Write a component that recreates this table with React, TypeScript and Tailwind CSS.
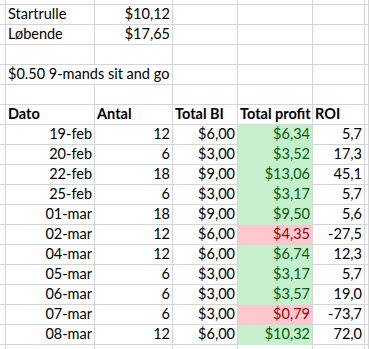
type Row = {
  dato: string;
  antal: number;
  bi: string;
  profit: string;
  roi: string;
  win: boolean;
};

const rows: Row[] = [
  { dato: '19-feb', antal: 12, bi: '$6,00', profit: '$6,34', roi: '5,7', win: true },
  { dato: '20-feb', antal: 6, bi: '$3,00', profit: '$3,52', roi: '17,3', win: true },
  { dato: '22-feb', antal: 18, bi: '$9,00', profit: '$13,06', roi: '45,1', win: true },
  { dato: '25-feb', antal: 6, bi: '$3,00', profit: '$3,17', roi: '5,7', win: true },
  { dato: '01-mar', antal: 18, bi: '$9,00', profit: '$9,50', roi: '5,6', win: true },
  { dato: '02-mar', antal: 12, bi: '$6,00', profit: '$4,35', roi: '-27,5', win: false },
  { dato: '04-mar', antal: 12, bi: '$6,00', profit: '$6,74', roi: '12,3', win: true },
  { dato: '05-mar', antal: 6, bi: '$3,00', profit: '$3,17', roi: '5,7', win: true },
  { dato: '06-mar', antal: 6, bi: '$3,00', profit: '$3,57', roi: '19,0', win: true },
  { dato: '07-mar', antal: 6, bi: '$3,00', profit: '$0,79', roi: '-73,7', win: false },
  { dato: '08-mar', antal: 12, bi: '$6,00', profit: '$10,32', roi: '72,0', win: true },
];

const cell = 'border-r border-b border-[#d4d4d4] flex items-end pb-[1px] whitespace-nowrap overflow-visible';

function Cell({ children, right, bold, className = '' }: { children?: React.ReactNode; right?: boolean; bold?: boolean; className?: string }) {
  return (
    <div className={`${cell} ${right ? 'justify-end pr-[2px]' : 'pl-[2px]'} ${bold ? 'font-bold' : ''} ${className}`}>
      {children}
    </div>
  );
}

function Blank() {
  return <div className="border-r border-b border-[#d4d4d4]" />;
}

export default function App() {
  return (
    <div
      className="w-[369px] h-[349px] overflow-hidden bg-white text-black text-[14.5px] leading-[18px]"
      style={{ fontFamily: 'Lato, "Open Sans", sans-serif' }}
    >
      <div className="grid grid-cols-[6px_89px_78px_65px_75px_52px_1fr] grid-rows-[5px_repeat(17,20px)_20px]">
        {/* partial top row */}
        {Array.from({ length: 7 }).map((_, i) => (
          <Blank key={`t${i}`} />
        ))}

        <Blank />
        <Cell>Startrulle</Cell>
        <Cell right>$10,12</Cell>
        <Blank />
        <Blank />
        <Blank />
        <Blank />

        <Blank />
        <Cell>Løbende</Cell>
        <Cell right>$17,65</Cell>
        <Blank />
        <Blank />
        <Blank />
        <Blank />

        {Array.from({ length: 7 }).map((_, i) => (
          <Blank key={`e${i}`} />
        ))}

        <Blank />
        <Cell className="col-span-2">$0.50 9-mands sit and go</Cell>
        <Blank />
        <Blank />
        <Blank />
        <Blank />

        {Array.from({ length: 7 }).map((_, i) => (
          <Blank key={`f${i}`} />
        ))}

        <Blank />
        <Cell bold>Dato</Cell>
        <Cell bold>Antal</Cell>
        <Cell bold>Total BI</Cell>
        <Cell bold>Total profit</Cell>
        <Cell bold>ROI</Cell>
        <Blank />

        {rows.map((r) => (
          <div key={r.dato} className="contents">
            <Blank />
            <Cell right>{r.dato}</Cell>
            <Cell right>{r.antal}</Cell>
            <Cell right>{r.bi}</Cell>
            <Cell
              right
              className={
                r.win
                  ? 'bg-[#c6efce] text-[#006100] border-b-[#c6efce]'
                  : 'bg-[#ffc7ce] text-[#9c0006] border-b-[#ffc7ce]'
              }
            >
              {r.profit}
            </Cell>
            <Cell right>{r.roi}</Cell>
            <Blank />
          </div>
        ))}

        {Array.from({ length: 7 }).map((_, i) => (
          <Blank key={`b${i}`} />
        ))}
      </div>
    </div>
  );
}
